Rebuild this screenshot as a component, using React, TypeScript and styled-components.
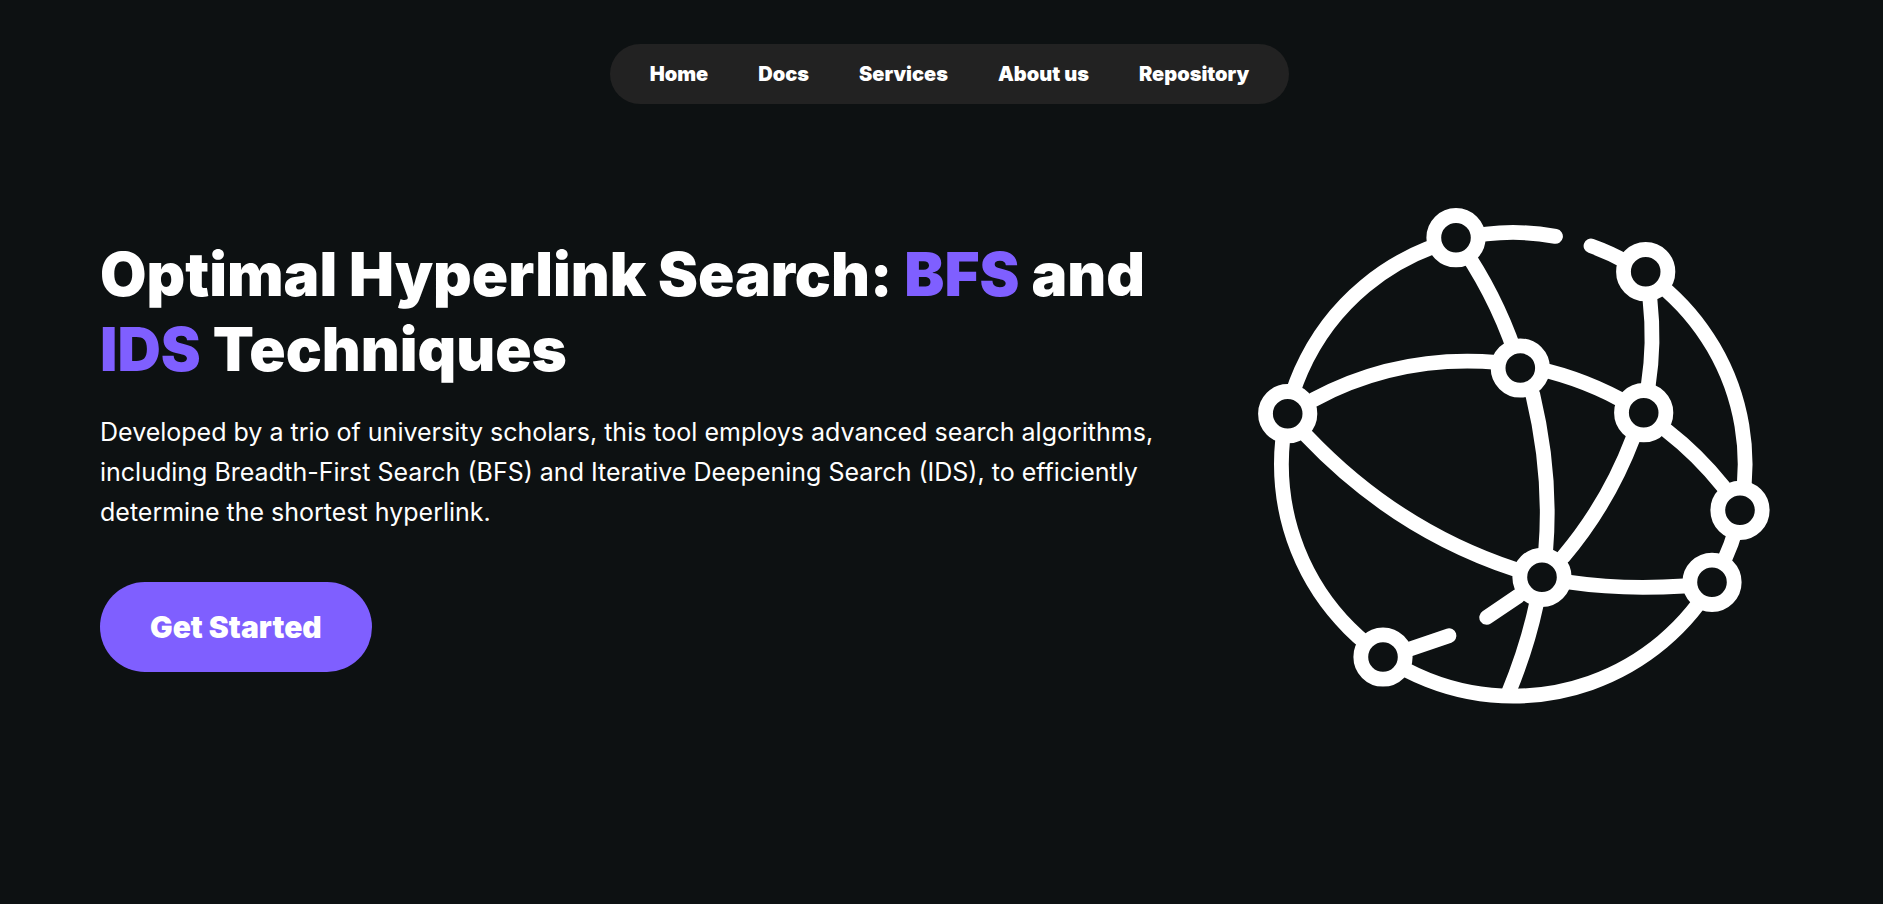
import React from "react";
import styled, { createGlobalStyle } from "styled-components";

const GlobalStyle = createGlobalStyle`
  * { box-sizing: border-box; }
  body {
    margin: 0;
    background: #0d1112;
    color: #fff;
    font-family: Inter, "Liberation Sans", sans-serif;
  }
`;

const Page = styled.div`
  display: flex;
  flex-direction: column;
  min-height: 100vh;
`;

const Header = styled.header`
  display: flex;
  justify-content: center;
  padding: 44px 0 0 16px;
`;

const Nav = styled.nav`
  display: flex;
  gap: 50px;
  align-items: center;
  padding: 15px 40px;
  border-radius: 30px;
  background: #222;
`;

const NavLink = styled.a`
  color: #fff;
  font-size: 20px;
  line-height: 30px;
  font-weight: 900;
  text-decoration: none;
`;

const Hero = styled.main`
  display: grid;
  grid-template-columns: minmax(0, 1fr) 512px;
  align-items: start;
  gap: 96px;
  padding: 96px 113px 0 100px;
`;

const Intro = styled.div`
  padding-top: 37px;
`;

const Title = styled.h1`
  margin: 0 0 25px;
  font-size: 60px;
  line-height: 75px;
  font-weight: 900;
`;

const Accent = styled.span`
  color: #7f5fff;
`;

const Lead = styled.p`
  margin: 0 0 50px;
  font-size: 25px;
  line-height: 40px;
`;

const StartButton = styled.button`
  padding: 25px 50px;
  border: 0;
  border-radius: 45px;
  background: #7f5fff;
  color: #fff;
  font-family: inherit;
  font-size: 30px;
  line-height: 40px;
  font-weight: 900;
  cursor: pointer;
`;

const Globe = styled.svg`
  display: block;
  width: 100%;
  height: auto;
`;

const links = ["Home", "Docs", "Services", "About us", "Repository"];

const nodes: [number, number][] = [
  [198, 37.7],
  [29.7, 213.7],
  [262.3, 168],
  [387.7, 71.7],
  [385.7, 212.7],
  [482, 310.3],
  [454, 382.3],
  [284, 377.3],
  [125, 457],
];

const edges = [
  // outer ring, open between the two top nodes
  "M333 45.9A231.8 231.8 0 0 1 255.2 496.1A231.8 231.8 0 0 1 23.4 264.3A231.8 231.8 0 0 1 297.5 36.4",
  "M198 38Q241 98 262 168",
  "M55.7 199.6A326 326 0 0 1 362.7 199.6",
  "M274.7 194.3Q294 275 287.7 350",
  "M278 405.7Q269 448 250 494",
  "M392 100Q396.8 143 390.3 185",
  "M408.7 230.7Q440 255 465.3 286.7",
  "M375.3 237.3Q350 304 305.3 356.7",
  "M312 382.3Q364 390 426 386",
  "M48.7 236Q138 330 257 369.3",
  "M260.3 396L228.7 417.3",
  "M151.3 449.3L191 435.7",
];

export default function App() {
  return (
    <Page>
      <GlobalStyle />
      <Header>
        <Nav>
          {links.map((label) => (
            <NavLink key={label} href="#">
              {label}
            </NavLink>
          ))}
        </Nav>
      </Header>
      <Hero>
        <Intro>
          <Title>
            Optimal Hyperlink Search: <Accent>BFS</Accent> and <Accent>IDS</Accent> Techniques
          </Title>
          <Lead>
            Developed by a trio of university scholars, this tool employs advanced search
            algorithms, including Breadth-First Search (BFS) and Iterative Deepening Search (IDS),
            to efficiently determine the shortest hyperlink.
          </Lead>
          <StartButton type="button">Get Started</StartButton>
        </Intro>
        <Globe viewBox="0 0 512 512" fill="none" stroke="#fff" strokeWidth="14.8" aria-hidden="true">
          {edges.map((d) => (
            <path key={d} d={d} strokeLinecap="round" />
          ))}
          {nodes.map(([cx, cy]) => (
            <circle key={`${cx}-${cy}`} cx={cx} cy={cy} r="22.2" fill="#0d1112" />
          ))}
        </Globe>
      </Hero>
    </Page>
  );
}
